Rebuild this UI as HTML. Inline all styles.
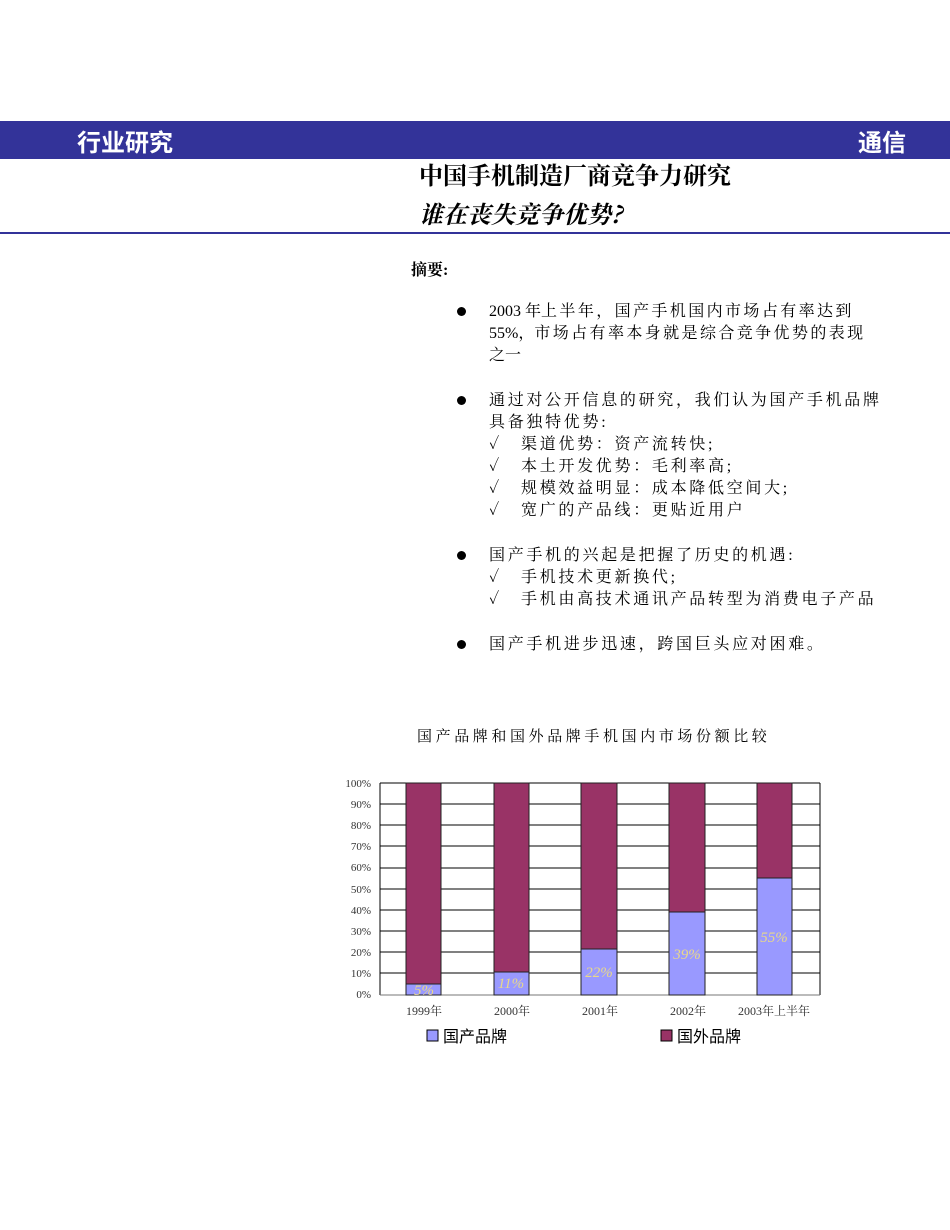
<!DOCTYPE html>
<html><head><meta charset="utf-8"><style>
body{margin:0;width:950px;height:1230px;background:#fff;position:relative;font-family:"Liberation Serif","Noto Serif CJK SC",serif;color:#000;overflow:hidden}
.a{position:absolute;white-space:nowrap}
.banner{position:absolute;left:0;top:121px;width:950px;height:38px;background:#333399;color:#fff;font-family:"Liberation Sans","Noto Sans CJK SC",sans-serif;font-size:24px;font-weight:bold}
.t{font-size:16px;line-height:22px;letter-spacing:2.7px}
.c{display:inline-block;width:32px;letter-spacing:0}
.dot{position:absolute;width:9px;height:9px;border-radius:50%;background:#000}
</style></head><body>
<div class="banner"><span class="a" style="left:77px;top:2px">行业研究</span><span class="a" style="left:858px;top:2px">通信</span></div>
<div class="a" style="left:419px;top:156px;font-size:24px;font-weight:bold;font-family:'Noto Serif CJK SC',serif">中国手机制造厂商竞争力研究</div>
<div class="a" style="left:419px;top:195px;font-size:24px;font-weight:bold;font-style:italic;font-family:'Noto Serif CJK SC',serif">谁在丧失竞争优势?</div>
<div style="position:absolute;left:0;top:232px;width:950px;height:2px;background:#333399"></div>
<div class="a t" style="left:411px;top:260px;font-weight:bold;letter-spacing:0">摘要:</div>

<div class="dot" style="left:457px;top:307px"></div>
<div class="a t" style="left:489px;top:301px;letter-spacing:0">2003 年<span style="letter-spacing:2.4px">上半年，国产手机国内市场占有率达到</span><br>55%，<span style="letter-spacing:2.4px">市场占有率本身就是综合竞争优势的表现</span><br>之一</div>

<div class="dot" style="left:457px;top:396px"></div>
<div class="a t" style="left:489px;top:390px">通过对公开信息的研究，我们认为国产手机品牌<br>具备独特优势:</div>
<div class="a t" style="left:489px;top:434px"><span class="c">✓</span>渠道优势：资产流转快;<br><span class="c">✓</span>本土开发优势：毛利率高;<br><span class="c">✓</span>规模效益明显：成本降低空间大;<br><span class="c">✓</span>宽广的产品线：更贴近用户</div>

<div class="dot" style="left:457px;top:551px"></div>
<div class="a t" style="left:489px;top:545px">国产手机的兴起是把握了历史的机遇:<br><span class="c">✓</span>手机技术更新换代;<br><span class="c">✓</span>手机由高技术通讯产品转型为消费电子产品</div>

<div class="dot" style="left:457px;top:640px"></div>
<div class="a t" style="left:489px;top:634px">国产手机进步迅速，跨国巨头应对困难。</div>

<div class="a" style="left:417px;top:725px;font-size:15px;letter-spacing:3.6px">国产品牌和国外品牌手机国内市场份额比较</div>

<svg style="position:absolute;left:0;top:0" width="950" height="1230">
<g font-family="Liberation Serif,serif" font-size="11" text-anchor="end" fill="#333">
<text x="371" y="787">100%</text><text x="371" y="808">90%</text><text x="371" y="829">80%</text><text x="371" y="850">70%</text><text x="371" y="871">60%</text><text x="371" y="893">50%</text><text x="371" y="914">40%</text><text x="371" y="935">30%</text><text x="371" y="956">20%</text><text x="371" y="977">10%</text><text x="371" y="998">0%</text>
</g>
<g stroke="#000" stroke-width="1">
<line x1="380" y1="783" x2="820" y2="783"/><line x1="380" y1="804" x2="820" y2="804"/><line x1="380" y1="825" x2="820" y2="825"/><line x1="380" y1="846" x2="820" y2="846"/><line x1="380" y1="868" x2="820" y2="868"/><line x1="380" y1="889" x2="820" y2="889"/><line x1="380" y1="910" x2="820" y2="910"/><line x1="380" y1="931" x2="820" y2="931"/><line x1="380" y1="952" x2="820" y2="952"/><line x1="380" y1="973" x2="820" y2="973"/>
<line x1="380" y1="783" x2="380" y2="995"/><line x1="820" y1="783" x2="820" y2="995"/>
<line x1="380" y1="995" x2="820" y2="995" stroke="#777"/>
</g>
<g stroke="#222" stroke-width="1">
<rect x="406" y="783" width="35" height="201" fill="#993366"/><rect x="406" y="984" width="35" height="11" fill="#9999ff"/>
<rect x="494" y="783" width="35" height="189" fill="#993366"/><rect x="494" y="972" width="35" height="23" fill="#9999ff"/>
<rect x="581" y="783" width="36" height="166" fill="#993366"/><rect x="581" y="949" width="36" height="46" fill="#9999ff"/>
<rect x="669" y="783" width="36" height="129" fill="#993366"/><rect x="669" y="912" width="36" height="83" fill="#9999ff"/>
<rect x="757" y="783" width="35" height="95" fill="#993366"/><rect x="757" y="878" width="35" height="117" fill="#9999ff"/>
</g>
<g font-family="Liberation Serif,serif" font-size="15" font-style="italic" fill="#e8d88a" text-anchor="middle">
<text x="424" y="995">5%</text><text x="511" y="988">11%</text><text x="599" y="977">22%</text><text x="687" y="959">39%</text><text x="774" y="942">55%</text>
</g>
<g font-family="Liberation Serif,Noto Serif CJK SC,serif" font-size="12" fill="#333" text-anchor="middle">
<text x="424" y="1015">1999年</text><text x="512" y="1015">2000年</text><text x="600" y="1015">2001年</text><text x="688" y="1015">2002年</text><text x="774" y="1015">2003年上半年</text>
</g>
<rect x="427" y="1030" width="11" height="11" fill="#9999ff" stroke="#000"/>
<rect x="661" y="1030" width="11" height="11" fill="#993366" stroke="#000"/>
<g font-family="Noto Sans CJK SC,sans-serif" font-size="16" fill="#000">
<text x="443" y="1042">国产品牌</text><text x="677" y="1042">国外品牌</text>
</g>
</svg>
</body></html>
